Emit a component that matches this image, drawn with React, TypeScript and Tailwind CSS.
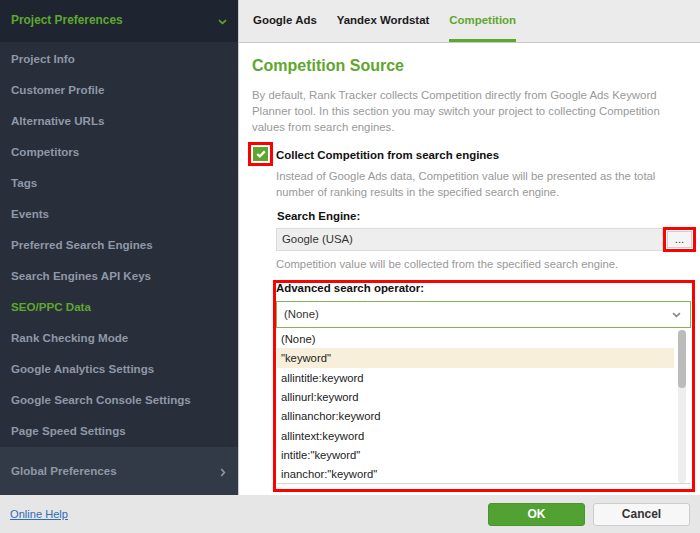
const navItems = [
  "Project Info",
  "Customer Profile",
  "Alternative URLs",
  "Competitors",
  "Tags",
  "Events",
  "Preferred Search Engines",
  "Search Engines API Keys",
  "SEO/PPC Data",
  "Rank Checking Mode",
  "Google Analytics Settings",
  "Google Search Console Settings",
  "Page Speed Settings",
];

const operators = [
  "(None)",
  '"keyword"',
  "allintitle:keyword",
  "allinurl:keyword",
  "allinanchor:keyword",
  "allintext:keyword",
  'intitle:"keyword"',
  'inanchor:"keyword"',
];

function Chevron({ className }: { className?: string }) {
  return (
    <svg width="9" height="6" viewBox="0 0 9 6" fill="none" className={className}>
      <path d="M1 1.2 4.5 4.4 8 1.2" stroke="currentColor" strokeWidth="1.6" />
    </svg>
  );
}

export default function App() {
  return (
    <div className="w-[700px] h-[533px] flex flex-col overflow-hidden bg-white font-['Liberation_Sans',Arial,sans-serif] text-[11.4px]">
      <div className="flex flex-1 min-h-0">
        {/* sidebar */}
        <aside className="w-[239px] flex flex-col bg-[#282e3a] border-r border-[#c9ccd0]">
          <div className="h-[42px] flex items-center justify-between px-[11px] bg-[#1f2530] text-[#5ea72e] text-[11.9px] font-bold">
            <span>Project Preferences</span>
            <Chevron className="mt-[2px]" />
          </div>
          <nav className="flex-1 pt-[1px] text-[11.6px]">
            {navItems.map((item) => (
              <div
                key={item}
                className={`h-[31px] flex items-center pl-[11px] font-bold ${
                  item === "SEO/PPC Data" ? "text-[#5ea72e]" : "text-[#8f98a6]"
                }`}
              >
                {item}
              </div>
            ))}
          </nav>
          <div className="h-[48px] flex items-center justify-between pl-[11px] pr-[12px] bg-[#333a47] text-[#8f98a6] text-[11.6px] font-bold">
            <span>Global Preferences</span>
            <svg width="6" height="9" viewBox="0 0 6 9" fill="none" className="mt-[2px]">
              <path d="M1.2 1 4.4 4.5 1.2 8" stroke="currentColor" strokeWidth="1.6" />
            </svg>
          </div>
        </aside>

        {/* main */}
        <main className="flex-1 min-w-0 flex flex-col">
          <div className="h-[43px] flex gap-[20px] pl-[14px] bg-[#ebebeb] border-b border-[#c8c8c8] font-bold text-[11.45px] text-[#1a1a1a]">
            <div className="h-[42px] pt-[12px]">Google Ads</div>
            <div className="h-[42px] pt-[12px]">Yandex Wordstat</div>
            <div className="h-[42px] pt-[12px] text-[#5ea72e] border-b-[3px] border-[#5ea72e]">Competition</div>
          </div>

          <div className="flex-1 min-h-0 pl-[13px] pr-[5px] pt-[13px]">
            <h1 className="text-[16px] leading-[20px] font-bold text-[#5ea72e]">Competition Source</h1>
            <p className="mt-[11px] leading-[16px] text-[#999999]">
              By default, Rank Tracker collects Competition directly from Google Ads Keyword
              <br />
              Planner tool. In this section you may switch your project to collecting Competition
              <br />
              values from search engines.
            </p>

            <div className="mt-[7px] flex items-center gap-[3px] h-[24px] -ml-[4px]">
              <div className="w-[25px] h-[24px] border-[3px] border-[#ff0000] bg-white p-[2px]">
                <div className="w-full h-full bg-[#5ea72e] flex items-center justify-center">
                  <svg width="10" height="8" viewBox="0 0 10 8" fill="none">
                    <path d="M1.2 4 3.8 6.4 8.8 1.4" stroke="white" strokeWidth="2.2" />
                  </svg>
                </div>
              </div>
              <span className="mt-[3px] font-bold text-[11.45px] text-[#111111]">Collect Competition from search engines</span>
            </div>

            <p className="mt-[2px] ml-[24px] leading-[16px] text-[11.3px] text-[#999999]">
              Instead of Google Ads data, Competition value will be presented as the total
              <br />
              number of ranking results in the specified search engine.
            </p>

            <div className="mt-[8px] ml-[25px] font-bold text-[11.45px] text-[#111111] leading-[16px]">Search Engine:</div>

            <div className="mt-[3px] ml-[24px] -mr-[1px] flex items-center">
              <div className="flex-1 h-[23px] flex items-center pl-[5px] pt-[1px] bg-[#eeeeee] border border-[#dcdcdc] text-[#333333]">
                Google (USA)
              </div>
              <div className="w-[33px] h-[25px] border-[3px] border-[#ff0000] bg-white p-[1px]">
                <div className="w-full h-full bg-[#f5f5f5] border border-[#cfcfcf] flex items-end justify-center pb-[2px] text-[#333333] leading-[12px]">
                  ...
                </div>
              </div>
            </div>

            <p className="mt-[4px] ml-[24px] leading-[16px] text-[11.3px] text-[#999999]">
              Competition value will be collected from the specified search engine.
            </p>

            <div className="mt-[8px] ml-[21px] h-[212px] border-[3px] border-[#ff0000] bg-white">
              <div className="font-bold text-[11.45px] text-[#111111] leading-[11px]">Advanced search operator:</div>
              <div className="mt-[7px] mr-[1px] h-[27px] flex items-center justify-between pl-[7px] pr-[9px] pt-[1px] border border-[#7fb65a] text-[#333333]">
                <span>(None)</span>
                <Chevron className="text-[#888888]" />
              </div>
              <div className="ml-[1px] mr-[2px] flex h-[156px] border-b border-[#d5d5d5] text-[11.25px]">
                <div className="flex-1 min-w-0 pt-[1px]">
                  {operators.map((op, i) => (
                    <div
                      key={op}
                      className={`h-[19.4px] flex items-center pl-[4px] pt-[1px] text-[#222222] ${i === 1 ? "bg-[#f7efd9]" : ""}`}
                    >
                      {op}
                    </div>
                  ))}
                </div>
                <div className="w-[8px] ml-[4px] mr-[4px] mt-[2px] rounded-[4px] bg-[#eeeeee]">
                  <div className="h-[58px] rounded-[4px] bg-[#bbbbbb]" />
                </div>
              </div>
            </div>
          </div>
        </main>
      </div>

      {/* footer */}
      <footer className="h-[38px] shrink-0 flex items-center bg-[#e6e6e6] px-[10px]">
        <a className="text-[11.1px] text-[#2f6db5] underline">Online Help</a>
        <div className="ml-auto flex gap-[8px] text-[12px]">
          <div className="w-[97px] h-[23px] flex items-center justify-center rounded-[3px] bg-[#52a233] border border-[#4a9430] text-white font-bold">
            OK
          </div>
          <div className="w-[97px] h-[23px] flex items-center justify-center rounded-[3px] bg-[#f7f7f7] border border-[#cccccc] text-[#333333] font-bold">
            Cancel
          </div>
        </div>
      </footer>
    </div>
  );
}
